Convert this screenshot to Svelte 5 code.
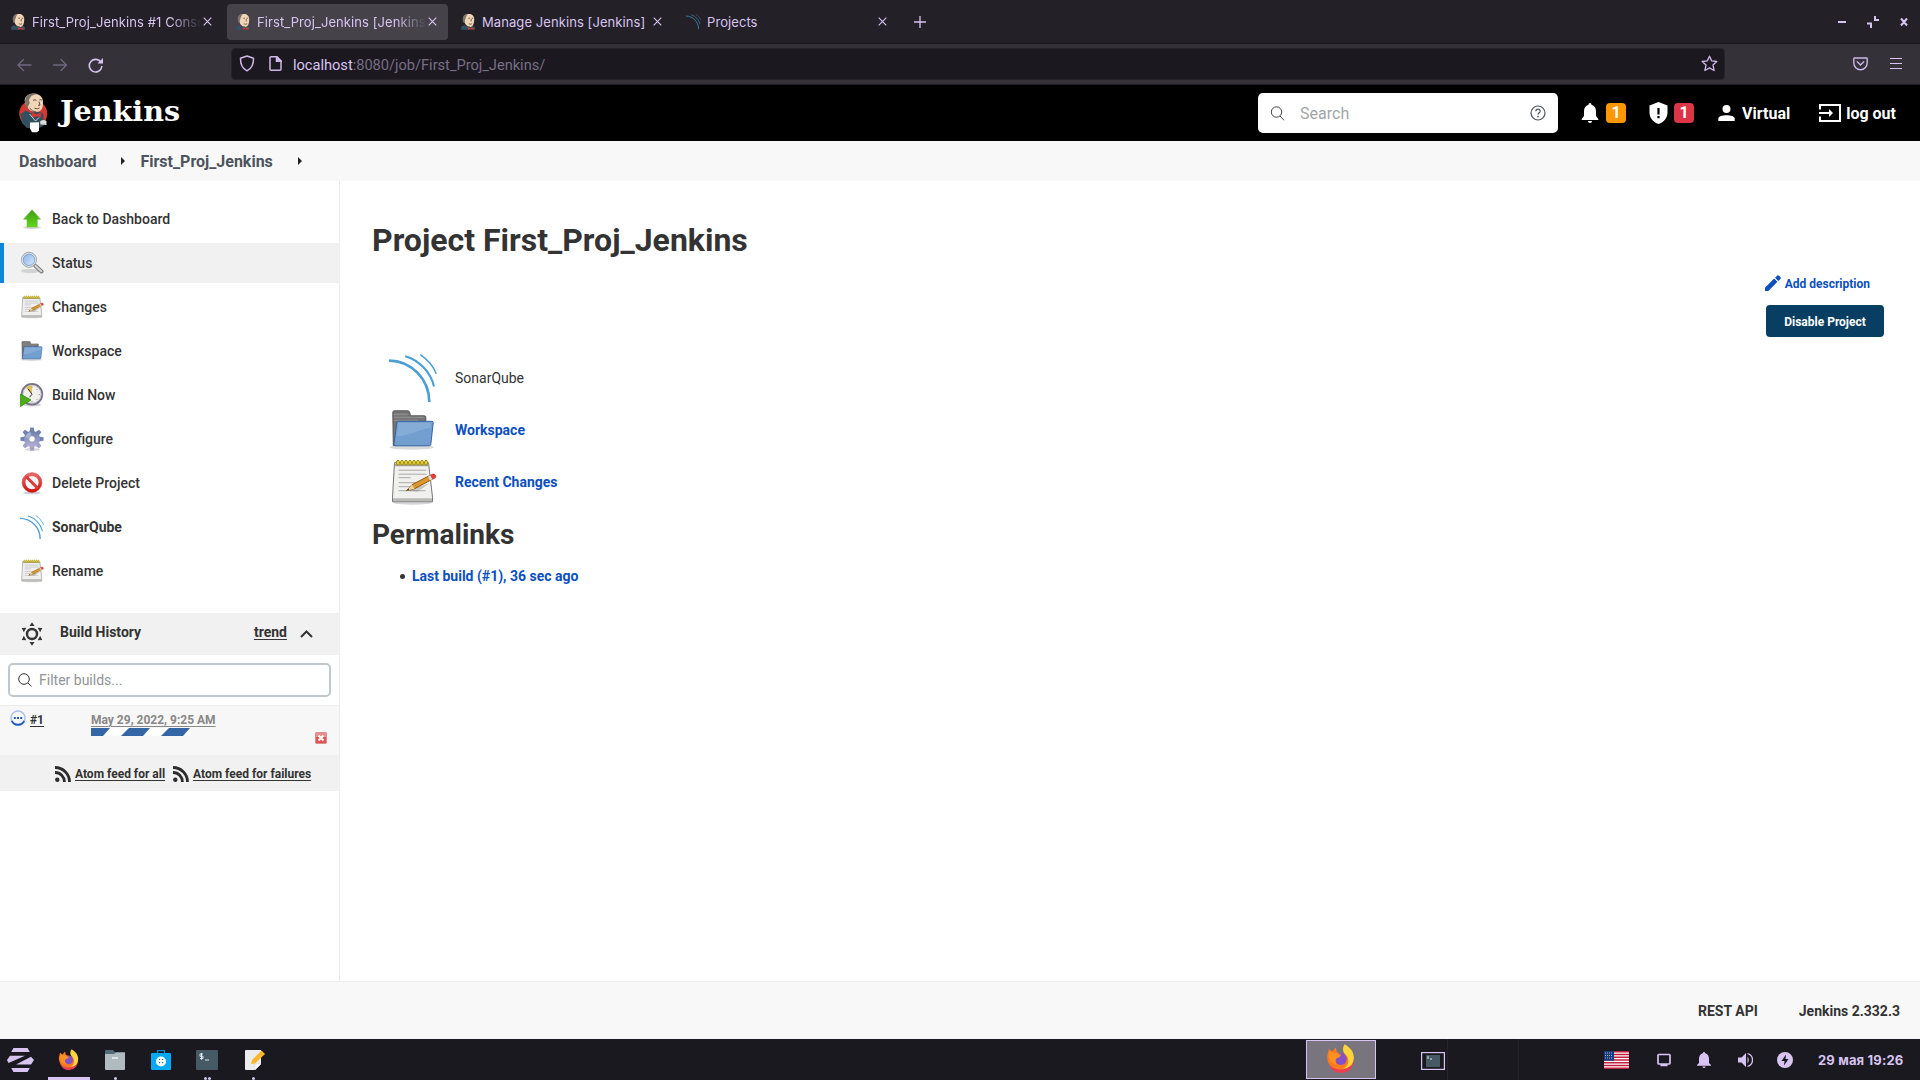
<script>
  const tabs = [
    { title: 'First_Proj_Jenkins #1 Console', icon: 'butler', fade: true },
    { title: 'First_Proj_Jenkins [Jenkins]', icon: 'butler', fade: true, active: true },
    { title: 'Manage Jenkins [Jenkins]', icon: 'butler' },
    { title: 'Projects', icon: 'sonar' }
  ];
  const tasks = [
    { icon: 'up', label: 'Back to Dashboard' },
    { icon: 'lens', label: 'Status', active: true },
    { icon: 'notepad', label: 'Changes' },
    { icon: 'folder', label: 'Workspace' },
    { icon: 'clock', label: 'Build Now' },
    { icon: 'gear', label: 'Configure' },
    { icon: 'ban', label: 'Delete Project' },
    { icon: 'sonar', label: 'SonarQube', strong: true },
    { icon: 'notepad', label: 'Rename' }
  ];
  const teeth = [0, 45, 90, 135, 180, 225, 270, 315];
  const rays = [0, 60, 120, 180, 240, 300];
  const rings = [0, 1, 2, 3, 4, 5, 6, 7];
</script>

{#snippet icon(name, size)}
  <svg width={size} height={size} viewBox="0 0 48 48" fill="none">
    {#if name === 'sonar'}
      <g stroke="#4b9fd5">
        <path stroke-width="2.7" d="M0 6.6C22 6.6 40.3 25 40.3 48" />
        <path stroke-width="2.1" d="M16.2 2.2C30 6 41.5 18 45 32.5" />
        <path stroke-width="1.6" d="M31.3 .7C38.500 5.500 44 12 47.300 19.800" />
      </g>
    {:else if name === 'folder'}
      <g transform="translate(-1.200 .8)">
        <ellipse cx="24" cy="40.500" rx="22" ry="2.500" fill="#999" opacity=".35" />
        <path d="M5 5.500q0-1.500 1.500-1.500H20q1.500 0 1.800 1.500l1 3.500H36.500q1.500 0 1.500 1.500V22L8 38.800H5.500Z" fill="#757575" stroke="#565656" />
        <path d="M6 7.500H20M6 10.500H36M6 13.500H30" stroke="#949494" />
        <path d="M9 16q.1-1.500 1.600-1.500H44q1.500 0 1.400 1.500L43 37.500q-.2 1.500-1.700 1.500H8q-2 0-1.800-2Z" fill="#729fcf" stroke="#3465a4" />
        <path d="M10.500 16H43.300L42.800 21C32 22 24 29 8.800 29.500Z" fill="#8fb4dc" opacity=".65" />
      </g>
    {:else if name === 'notepad'}
      <g transform="translate(-1.500 -.8)">
        <ellipse cx="25" cy="45" rx="20" ry="2.500" fill="#888" opacity=".35" />
        <path d="M7 5.500H41L45 40v4.500H5V40Z" fill="#f0f0ee" stroke="#777" stroke-linejoin="round" />
        <path d="M7.600 6.500H40.500V9H7.400Z" fill="#a5a5a2" />
        <path d="M5.500 41H44.500V44H5.500Z" fill="#b9b9b6" />
        {#each rings as r}
          <ellipse cx={10.5 + r * 4} cy="5.500" rx="1.400" ry="2.500" fill="#f0dc3f" stroke="#9c8a00" />
        {/each}
        <path d="M11 13H39M11 17H39M11 20.500H23M11 25.500H38M11 29.500H32M11 33.500H38" stroke="#aaa" />
        <path d="M18 33.500 30 34.500 42 26Z" fill="#888" opacity=".4" />
        <path d="M19 33.500 24.500 27.500 42.500 18.200 44.500 22.200 27 31.500Z" fill="#dc9632" stroke="#8f5902" />
        <path d="m19 33.500 5.500-6 2.500 4Z" fill="#e9d2a5" />
        <path d="m19 33.500 1.800-2.200 1 1.600Z" fill="#333" />
        <path d="m43 18 2 4.100 2.600-1.400q1.300-.9.400-2.500t-2.500-1.400Z" fill="#ef3b36" stroke="#b52a20" stroke-width=".7" />
        <path d="m40.500 19.300 2 4 2.300-1.200-2-4Z" fill="#ddd" />
      </g>
    {:else if name === 'up'}
      <ellipse cx="24" cy="41" rx="18" ry="3" fill="#777" opacity=".3" />
      <path d="M24 5.500 41 24.500H34.500V40H14V24.500H7Z" fill="url(#green)" stroke="#6bb13d" stroke-linejoin="round" />
    {:else if name === 'lens'}
      <ellipse cx="21" cy="40" rx="19" ry="4" fill="#777" opacity=".25" />
      <path d="m31 30 12 11" stroke="#777" stroke-width="8" stroke-linecap="round" />
      <path d="m31 30 11.500 10.500" stroke="#d4d4d2" stroke-width="4.500" stroke-linecap="round" />
      <circle cx="18" cy="17.500" r="15" fill="#aecbea" stroke="#a4a4a4" stroke-width="2" />
      <circle cx="18" cy="17.500" r="12.800" stroke="#f3f3f3" stroke-width="2" />
      <circle cx="18" cy="17.500" r="11.500" fill="url(#glass)" stroke="#6f96c8" stroke-width="1.500" />
    {:else if name === 'clock'}
      <ellipse cx="25" cy="44" rx="18" ry="3" fill="#777" opacity=".35" />
      <circle cx="24" cy="22.500" r="20.500" fill="#f1f0ec" stroke="#77748c" stroke-width="3.600" />
      <circle cx="24" cy="22.500" r="18" stroke="#bcbac9" stroke-width="1.500" />
      <path d="M24 22.500 12 9.500Q17 4.500 24 5Z" fill="#e2c451" />
      <path d="m24 22.500-8-11M24 22.500l-5 6" stroke="#333" stroke-width="2" />
      <path d="M24 7v3M40 23h-3M24 39v-3M35 12l-2 2M35 34l-2-2" stroke="#888" stroke-width="1.500" />
      <path d="M1 22 22 34 1 47Z" fill="#4caf18" stroke="#2d8c06" stroke-width="1.500" />
    {:else if name === 'gear'}
      <ellipse cx="25" cy="45" rx="15" ry="3" fill="#777" opacity=".3" />
      <g fill="url(#steel)">
        {#each teeth as a}
          <path d="M18.500 13 20.500 1h7l2 12Z" transform="rotate({a} 24 24)" fill={a > 90 && a < 270 ? '#a09fca' : '#7083b2'} />
        {/each}
        <circle cx="24" cy="24" r="16" />
      </g>
      <path d="M11 20Q13 12 21 10l2 8q-5 1-6 6Z" fill="#b9c1dc" opacity=".7" />
      <circle cx="24" cy="24" r="6.500" fill="#fff" stroke="#7d86ae" stroke-width="1.500" />
    {:else if name === 'ban'}
      <ellipse cx="24" cy="44" rx="18" ry="2.500" fill="#777" opacity=".35" />
      <circle cx="24" cy="23" r="16.500" fill="#f4f4f4" stroke="url(#red)" stroke-width="6.500" />
      <path d="m12.500 11.500 23 23" stroke="#dc3a3a" stroke-width="6" />
      <circle cx="24" cy="23" r="19.800" stroke="#c23030" />
    {/if}
  </svg>
{/snippet}

{#snippet head()}
  <path d="M.2 16.800v-3L3 12.200l4 1.500 5-1 2 1.500v2.600Z" fill="#335061" />
  <path d="M2.800 7C2 2.500 4.500 1 7.700 1c3.500 0 5.500 2 5.500 5.300 0 4.500-1.300 7.700-4.200 7.700C6 14 3.600 11 2.800 7Z" fill="#f0d6b7" />
  <path d="M2.300 9.500C1 4.500 2 1.200 7 .7 5 2.500 4.900 4.500 4.400 6L3.800 7.500 4 10Z" fill="#7d756d" />
  <path d="M7.300 5.200h1.700M10.600 5.200h1.600M10.200 6v2.500M7.800 10.800q2 1 3.400-.1M5 12.500q1.500 1.500 4 1.500" stroke="#5b4a3e" stroke-width=".8" fill="none" />
  <path d="m7 14.200 2.600 1 2.900-1v2.600l-2.700-.7-2.800.7Z" fill="#d33833" />
{/snippet}

{#snippet close()}
  <svg class="close" width="9" height="9" viewBox="0 0 9 9"><path d="m.7.7 7.600 7.600M8.300.7.700 8.300" stroke="#d8c4f1" stroke-width="1.100" /></svg>
{/snippet}

{#snippet firefox(size)}
  <svg width={size} height={size} viewBox="0 0 24 24">
    <path d="M2 11Q2 24 13 24 23 23 23 12L12 8Z" fill="#e83f54" />
    <path d="M1 11.500C.8 9 2 7 2.300 4L5 6.500 8 2.800l1 4 7 2 6.500 3C21.500 18 18 21 12 21 5 21 1.500 17 1 11.500Z" fill="#ff7a20" />
    <path d="M15.500.3c5 3 8 7 7.500 12C22.500 18 18 20.500 14 20.500c5-2.500 6-8 2.500-11.500C13.500 7 13.500 3 15.500.3Z" fill="#ffd43a" />
    <circle cx="12.300" cy="12.500" r="4.900" fill="#8352c9" />
    <path d="M2.500 6 8 7.500 12.500 9q-1 2.500-3.500 2.500-2.500 2.500.5 6-6-1-7-7Z" fill="#ff911f" />
  </svg>
{/snippet}

{#snippet rss()}
  <svg width="16" height="16" viewBox="0 0 16 16" fill="none" stroke="#2d2d2d" stroke-width="2.800">
    <circle cx="2.300" cy="13.700" r="2.200" fill="#2d2d2d" stroke="none" />
    <path d="M0 6.500a9.300 9.300 0 0 1 9.400 9.500M0 1.500A14.400 14.400 0 0 1 14.500 16" />
  </svg>
{/snippet}

<svg class="defs" width="0" height="0">
  <defs>
    <linearGradient id="green" x2="0" y2="1"><stop stop-color="#3f9a12" /><stop offset="1" stop-color="#62d81c" /></linearGradient>
    <linearGradient id="glass" x2="1" y2="1"><stop stop-color="#86b3e8" /><stop offset="1" stop-color="#dbe9f8" /></linearGradient>
    <linearGradient id="steel" x2="0" y2="1"><stop stop-color="#6b80ac" /><stop offset="1" stop-color="#b5b0d6" /></linearGradient>
    <linearGradient id="red" x2="0" y2="1"><stop stop-color="#ea6666" /><stop offset="1" stop-color="#d01414" /></linearGradient>
  </defs>
</svg>

<div class="screen">
  <div class="tabbar">
    {#each tabs as tab}
      <div class="tab" class:active={tab.active}>
        {#if tab.icon === 'butler'}
          <svg class="fav" width="15" height="17" viewBox="0 0 15 17">{@render head()}</svg>
        {:else}
          <span class="fav dim">{@render icon('sonar', 15)}</span>
        {/if}
        <span class="tabtitle" class:fade={tab.fade}>{tab.title}</span>
        {@render close()}
      </div>
    {/each}
    <svg class="plus" width="12" height="12" viewBox="0 0 12 12"><path d="M6 0v12M0 6h12" stroke="#d8c4f1" stroke-width="1.300" /></svg>
    <svg class="winctl" width="71" height="12" viewBox="0 0 71 12" stroke="#d8c4f1" stroke-width="2" fill="none">
      <path d="M0 6h8M37 0v5M36 4h5M29 7.500h5M33 6.500V12M63 2.500l6 7M69 2.500l-6 7" />
    </svg>
  </div>

  <div class="navbar">
    <svg class="arrows" width="86" height="16" viewBox="0 0 86 16" fill="none" stroke-width="1.400" stroke-linecap="round" stroke-linejoin="round">
      <path d="M14 8H1M6.500 2.500 1 8l5.500 5.500M36.500 8h13M44 2.500 49.500 8 44 13.500" stroke="#6f657e" />
      <path d="M84 5.500A6.300 6.300 0 1 0 84.800 9.500" stroke="#d8c4f1" stroke-width="1.600" />
      <path d="M86 1v5.500H80.500Z" fill="#d8c4f1" stroke="none" />
    </svg>
    <div class="urlbar">
      <svg width="16" height="17" viewBox="0 0 16 17" fill="none" stroke="#cdb7e8" stroke-width="1.500"><path d="M8 1 14.500 3.200C14.700 9.500 12.500 13.500 8 15.800 3.500 13.500 1.300 9.500 1.500 3.200Z" stroke-linejoin="round" /></svg>
      <svg class="page" width="13" height="15" viewBox="0 0 13 15" fill="none" stroke="#cdb7e8" stroke-width="1.500"><path d="M1 1.700Q1 .8 2 .8H8L12 4.800V13.300Q12 14.200 11 14.200H2Q1 14.200 1 13.300Z" /><path d="M7.500 1V5.300H12Z" fill="#cdb7e8" /></svg>
      <span class="url"><b>localhost</b>:8080/job/First_Proj_Jenkins/</span>
      <svg class="star" width="17" height="17" viewBox="0 0 17 17" fill="none" stroke="#cdb7e8" stroke-width="1.300" stroke-linejoin="round"><path d="m8.500 1.200 2.200 4.700 5.100.6-3.800 3.500 1.100 5.500-4.600-2.600-4.600 2.600L5 10 1.200 6.500l5.100-.6Z" /></svg>
    </div>
    <svg class="pocket" width="15" height="14" viewBox="0 0 15 14" fill="none" stroke="#cdb7e8" stroke-width="1.400"><path d="M1.500 1h12q.7 0 .7.700V6a6.700 6.700 0 0 1-13.400 0V1.700Q.8 1 1.500 1Z" /><path d="m4.300 4.800 3.200 3.300 3.200-3.300" stroke-linecap="round" /></svg>
    <svg class="menu" width="12" height="11" viewBox="0 0 12 11"><path d="M0 .5h12M0 5.500h12M0 10.500h12" stroke="#d8c4f1" /></svg>
  </div>

  <header class="header">
    <svg class="logo" width="29" height="40" viewBox="0 0 29 40">
      <ellipse cx="14.200" cy="20.500" rx="14" ry="13.500" fill="#d33833" />
      <path d="M1.500 21 7 17.500l5 2.500 8-1.500q5 1.500 4.500 6v8.500L20 35H8L3 30Z" fill="#335061" />
      <path d="M6 9.500C4.500 4 9 .8 14.500.8 20.500.8 24 4 24 9.500c0 6-2 9.500-6.500 9.500C12 19 8 16 6 9.500Z" fill="#f0d6b7" />
      <path d="M8.500 16C4 8.500 5.500 1.500 13.500.3c1.500-.2 4 0 5 .6-5 .5-7.500 2.600-8.500 6.500l.8 2.600-1.300 2.500Z" fill="#7d756d" />
      <path d="M14 7.300q2-1 3.500 0M20.300 7q1.500-.8 2.700.2M20 8.500l1 3.800h-2M15.500 15.200q3 1.500 5-.2M10.500 15q3 4 7 4" stroke="#51443a" stroke-width=".9" fill="none" />
      <path d="m12.500 19.500 5 1.800L22 19.500v5l-4.200-1.300-4.800 1.500Z" fill="#d33833" />
      <path d="m10.500 21 6 7 3.500-3.500" stroke="#fff" fill="none" stroke-width=".7" />
      <path d="m11 29.500 9-.3v8l-2 2h-5l-2-4Z" fill="#fff" />
      <path d="M21 28.500q3.500-2.500 6.500-.5v4l-6-.5Z" fill="#d9d9d9" />
    </svg>
    <span class="brand">Jenkins</span>
    <div class="search">
      <svg width="15" height="15" viewBox="0 0 15 15" fill="none" stroke="#444"><circle cx="6.500" cy="6" r="5.200" /><path d="m10 10 4 4.300" /></svg>
      <span>Search</span>
      <svg class="help" width="16" height="16" viewBox="0 0 16 16" fill="none" stroke="#4d545d" stroke-width="1.200"><circle cx="8" cy="8" r="7" /><path d="M5.800 6.300Q5.900 4.200 8 4.200T10.200 6.200C10.200 7.700 8 7.700 8 9.500" /><circle cx="8" cy="11.600" r=".35" /></svg>
    </div>
    <div class="alerts">
      <svg width="18" height="20" viewBox="0 0 18 20" fill="#fff"><path d="M9 0q1.500 0 1.500 1.700Q15 3 15 8.500V13l2.300 3v1H.7v-1L3 13V8.500Q3 3 7.500 1.700 7.500 0 9 0ZM7 18h4q0 2-2 2t-2-2Z" /></svg>
      <span class="badge">1</span>
      <svg class="shield" width="19" height="22" viewBox="0 0 19 22"><path d="m9.500 0 9 3.600v7.200c0 5-3.500 9.500-9 11.200C4 20.300.5 15.800.5 10.800V3.600Z" fill="#fff" /><path d="M9.500 6v6.500M9.500 14v2.200" stroke="#000" stroke-width="2.200" /></svg>
      <span class="badge red">1</span>
    </div>
    <svg class="person" width="17" height="16" viewBox="0 0 17 16" fill="#fff"><circle cx="8.500" cy="4" r="4" /><path d="M.3 16v-2.500C.3 9 16.700 9 16.700 13.500V16Z" /></svg>
    <span class="user">Virtual</span>
    <svg class="exit" width="22" height="18" viewBox="0 0 22 18" fill="none" stroke="#fff" stroke-width="2"><path d="M1 5.500V1H21V17H1V12.500M0 9H13" /><path d="m10 5 4 4-4 4Z" fill="#fff" stroke="none" /></svg>
    <span class="user">log out</span>
  </header>

  <nav class="crumbs">
    <span>Dashboard</span><i></i><span>First_Proj_Jenkins</span><i></i>
  </nav>

  <div class="body">
    <aside class="side">
      <div class="tasks">
        {#each tasks as t}
          <div class="task" class:active={t.active} class:strong={t.strong}>
            {@render icon(t.icon, 24)}<span>{t.label}</span>
          </div>
        {/each}
      </div>
      <div class="bhead">
        <svg class="sun" width="24" height="24" viewBox="0 0 24 24">
          <circle cx="12" cy="12" r="5" fill="none" stroke="#333" stroke-width="2.400" />
          {#each rays as a}<path d="M9.500 4 12 .2l2.500 3.800Z" fill="#333" transform="rotate({a} 12 12)" />{/each}
        </svg>
        <span class="btitle">Build History</span>
        <span class="trend">trend</span>
        <svg class="chev" width="13" height="8" viewBox="0 0 13 8" fill="none" stroke="#333" stroke-width="2"><path d="m1 7 5.500-5.500L12 7" /></svg>
      </div>
      <div class="filter">
        <div class="finput">
          <svg width="14" height="14" viewBox="0 0 14 14" fill="none" stroke="#333"><circle cx="6" cy="6" r="5.300" /><path d="m9.800 9.800 3.700 3.700" /></svg>
          <span>Filter builds...</span>
        </div>
      </div>
      <div class="build">
        <svg class="prog" width="16" height="17" viewBox="0 0 16 17" fill="none"><circle cx="8" cy="8" r="7" stroke="#a9c1e6" stroke-width="1.500" /><path d="M1.800 11a7 7 0 0 0 12.400 0" stroke="#1f5dbc" stroke-width="1.800" /><path d="M3.800 8h2M7 8h2M10.200 8h2" stroke="#1f5dbc" stroke-width="2.200" /></svg>
        <span class="num">#1</span>
        <div class="when">
          <span>May 29, 2022, 9:25 AM</span>
          <svg width="100" height="8" viewBox="0 0 100 8"><path fill="#fff" d="M0 0h100v8H0Z" /><path fill="#3465a4" d="M0 0h19l-7 8H0ZM38 0h21l-7 8H30ZM78 0h21l-7 8H70Z" /></svg>
        </div>
        <svg class="stop" width="12" height="12" viewBox="0 0 12 12"><rect x=".5" y=".5" width="11" height="11" rx="1" fill="#e35353" stroke="#dd8f8f" /><path d="M1 1h10v4H1Z" fill="#ec8c8c" /><path d="m3.500 3.500 5 5M8.500 3.500l-5 5" stroke="#fff" stroke-width="2" /></svg>
      </div>
      <div class="feeds">
        {@render rss()}<span>Atom feed for all</span>
        {@render rss()}<span>Atom feed for failures</span>
      </div>
    </aside>

    <main class="main">
      <h1>Project First_Proj_Jenkins</h1>
      <div class="actions">
        <div class="adddesc">
          <svg width="16" height="16" viewBox="0 0 17 17" fill="#0b4fc0"><path d="M0 13.500V17h3.500L13.200 7.200 9.700 3.700ZM16.500 3.900q.7-.7 0-1.400L14.500.5q-.7-.7-1.400 0L10.700 2.800l3.500 3.500Z" /></svg>
          <span>Add description</span>
        </div>
        <button>Disable Project</button>
      </div>
      <div class="links">
        <div>{@render icon('sonar', 48)}<span class="plain">SonarQube</span></div>
        <div>{@render icon('folder', 48)}<span>Workspace</span></div>
        <div>{@render icon('notepad', 48)}<span>Recent Changes</span></div>
      </div>
      <h2>Permalinks</h2>
      <div class="perma"><i></i><span>Last build (#1), 36 sec ago</span></div>
    </main>
  </div>

  <footer class="footer"><span>REST API</span><span>Jenkins 2.332.3</span></footer>

  <div class="taskbar">
    <div class="apps">
      <div class="app zorin"><svg width="27" height="24" viewBox="0 0 27 24" fill="#d8c4f1"><path d="M6.500 0h14l2.300 4H4.200ZM4.200 20h18.600l-2.300 4h-14ZM3 7.700H18L1.500 15 0 12ZM24 8.700 27 12l-3 4.500H9Z" /></svg></div>
      <div class="app fox">{@render firefox(21)}<em class="bar"></em></div>
      <div class="app"><svg width="20" height="20" viewBox="0 0 20 20"><path d="M0 1q0-1 1-1H8l2 2H19q1 0 1 1V8H0Z" fill="#536b78" /><path d="M0 4H9l2-1.500h9V19q0 1-1 1H1q-1 0-1-1Z" fill="#b0bbc0" /><path d="M7 8h6" stroke="#fff" stroke-width="1.200" /></svg><em class="dot"></em></div>
      <div class="app"><svg width="20" height="20" viewBox="0 0 20 20"><path d="M6.500 4V.7h7V4" fill="none" stroke="#0486cf" stroke-width="1.300" /><rect y="3" width="20" height="17" rx="1" fill="#03a9f4" /><circle cx="10" cy="11.500" r="5" fill="#fff" /><path d="M8 9.500h1.200M11 9.500h1.200M8 12.700h1.200M11 12.700h1.200" stroke="#1c6d96" stroke-width="1.200" /></svg></div>
      <div class="app"><svg width="22" height="20" viewBox="0 0 22 20"><rect width="22" height="20" rx="1" fill="#455a64" /><path d="M7 4H4v2.300h3v2.300H4M5.500 3v6.700M9 10h4" fill="none" stroke="#dfe7ea" /></svg><em class="dot two"></em></div>
      <div class="app edit"><svg width="20" height="20" viewBox="0 0 20 20"><path d="M1 0H16V14l-6 6H1Q0 20 0 19V1Q0 0 1 0Z" fill="#ececec" /><path d="M16 14h-6v6Z" fill="#fff" stroke="#ccc" stroke-width=".5" /><path d="M6 14 7 10 16.500.5 20 4 10 13.500Z" fill="#fbb72c" /></svg><em class="dot"></em></div>
    </div>
    <div class="spaces">
      <div class="space on">{@render firefox(29)}</div>
      <div class="space"><svg class="mini" width="24" height="18" viewBox="0 0 24 18"><rect x=".6" y=".6" width="22.800" height="16.800" fill="#1b1920" stroke="#d8c4f1" stroke-width="1.200" /><rect x="5" y="3" width="14" height="12" fill="#455a64" /><path d="M7 4v3M9 7h2" stroke="#dfe7ea" /></svg></div>
      <div class="space"></div>
      <div class="space last"></div>
    </div>
    <div class="tray">
      <svg width="25" height="18" viewBox="0 0 25 18"><path fill="#fff" d="M0 0h25v18H0Z" /><path d="M0 .7h25M0 3.500h25M0 6.300h25M0 9h25M0 11.800h25M0 14.500h25M0 17.300h25" stroke="#c11f3d" stroke-width="1.400" /><path fill="#173a7a" d="M0 0h10v9.700H0Z" /><path d="M1 2h8M1 4.500h8M1 7h8" stroke="#a9b5d0" stroke-dasharray="1 1" /></svg>
      <svg class="mon" width="14" height="14" viewBox="0 0 14 14" fill="none" stroke="#d8c4f1" stroke-width="1.700"><path d="M1.800 1.500H12.200Q13 1.500 13 2.300V10.200Q13 11 12.200 11H1.800Q1 11 1 10.200V2.300Q1 1.500 1.800 1.500ZM3.500 12.300h7" /></svg>
      <svg class="ring" width="14" height="16" viewBox="0 0 14 16" fill="#d8c4f1"><path d="M7 0Q8 0 8.200 1.300 12 2.500 12 7v4l2 2v.8H0V13l2-2V7Q2 2.500 5.800 1.300 6 0 7 0ZM5.500 14.500h3Q8.500 16 7 16T5.500 14.500Z" /></svg>
      <svg width="15" height="16" viewBox="0 0 15 16" fill="#d8c4f1"><path d="M0 5.500h3.500L8 1v14L3.500 10.500H0Z" /><path d="M9.500 4.500Q12 8 9.500 11.500Z" /><path d="M9.500 1.500q5 1.500 5 6.500t-5 6.500" fill="none" stroke="#d8c4f1" stroke-width="1.300" /></svg>
      <svg class="bolt" width="16" height="16" viewBox="0 0 16 16"><circle cx="8" cy="8" r="8" fill="#d8c4f1" /><path d="M9 2.500 4.500 9h3L7 13.500 11.500 7h-3Z" fill="#1b1920" /></svg>
      <span>29 мая 19:26</span>
    </div>
  </div>
</div>

<style>
  :global(body) { margin: 0; overflow: hidden; }
  .defs { position: absolute; }
  svg { display: block; flex: none; }
  .screen { width: 1920px; height: 1080px; display: flex; flex-direction: column; background: #fff; color: #333; font-family: Roboto, sans-serif; font-size: 14px; overflow: hidden; }
  .screen * { box-sizing: border-box; }

  .tabbar { height: 44px; flex: none; display: flex; align-items: center; background: #232027; border-bottom: 1px solid #17151a; padding-left: 2px; }
  .tab { width: 221px; height: 36px; margin-right: 4px; border-radius: 4px; display: flex; align-items: center; padding: 0 11px 0 9px; font: 13px Inter, sans-serif; color: #d8c4f1; }
  .tab.active { background: #45424a; }
  .fav { margin-right: 6px; }
  .dim { opacity: .8; }
  .tabtitle { flex: 1; overflow: hidden; white-space: nowrap; letter-spacing: .08px; padding-top: 1px; }
  .fade { -webkit-mask-image: linear-gradient(90deg, #000 82%, transparent 101%); }
  .close { margin-left: 3px; }
  .plus { margin-left: 12px; }
  .winctl { margin: 0 11px 0 auto; }

  .navbar { height: 41px; flex: none; display: flex; align-items: center; background: #343138; border-bottom: 1px solid #232027; padding: 0 18px 1px 17px; }
  .arrows { margin: 2px 128px 0 0; overflow: visible; }
  .urlbar { width: 1494px; height: 32px; background: #1b181f; border: 1px solid #26232a; border-radius: 4px; display: flex; align-items: center; padding: 0 6px 0 7px; }
  .page { margin: 0 11px 0 14px; }
  .url { font-size: 14.67px; letter-spacing: -.03px; color: #776e85; padding-top: 2px; }
  .url b { font-weight: 400; color: #d8c4f1; }
  .star { margin-left: auto; }
  .pocket { margin-left: auto; }
  .menu { margin-left: 22px; }

  .header { height: 56px; flex: none; background: #000; display: flex; align-items: center; padding: 0 24px 0 19px; color: #fff; }
  .brand { font: bold 28.6px/40px "DejaVu Serif", serif; margin: -4px auto 0 12px; }
  .search { width: 300px; height: 40px; background: #fff; border-radius: 5px; display: flex; align-items: center; padding: 0 12px; font-size: 16px; color: #a2a6aa; }
  .search span { margin-left: 15px; }
  .help { margin-left: auto; }
  .alerts { display: flex; align-items: center; margin-left: 23px; }
  .badge { width: 20px; height: 20px; margin-left: 7px; border-radius: 4px; background: #ff9800; font: bold 16px/20px Roboto, sans-serif; text-align: center; }
  .badge.red { background: #dc3545; margin-left: 6px; }
  .shield { margin-left: 23px; }
  .person { margin-left: 24px; }
  .user { font-weight: 700; font-size: 16px; margin-left: 7px; }
  .exit { margin-left: 29px; }
  .exit + .user { margin-left: 5px; }

  .crumbs { height: 40px; flex: none; background: #f8f8f8; display: flex; align-items: center; padding-left: 19px; font-size: 16px; font-weight: 700; color: #4d545d; }
  .crumbs i { border: 4px solid transparent; border-left-color: #222; border-right: 0; margin: 0 15px 0 25px; }

  .body { height: 800px; flex: none; display: flex; }
  .side { width: 340px; border-right: 1px solid #ececec; }
  .tasks { padding-top: 18px; height: 432px; display: flex; flex-direction: column; gap: 4px; }
  .task { height: 40px; display: flex; align-items: center; gap: 8px; padding-left: 20px; font-weight: 500; }
  .task.active { background: #f1f1f1; border-left: 4px solid #0b87d6; padding-left: 16px; }
  .task.strong { font-weight: 700; }
  .bhead { height: 42px; background: #f1f1f1; display: flex; align-items: center; padding: 0 26px 4px 20px; font-weight: 700; }
  .sun { margin-top: 3px; }
  .btitle { margin-left: 16px; }
  .trend { margin-left: auto; text-decoration: underline; text-underline-offset: 2px; }
  .chev { margin: 4px 0 0 13px; }
  .filter { height: 50px; padding: 8px 8px 0; }
  .finput { height: 34px; border: 2px solid #bfc8cd; border-radius: 5px; display: flex; align-items: center; gap: 7px; padding-left: 8px; color: #909497; }
  .build { height: 50px; background: #f7f7f7; border-top: 1px solid #ececec; display: flex; align-items: flex-start; padding: 4px 12px 0 10px; font-size: 12px; font-weight: 700; }
  .num { margin: 3px 0 0 4px; text-decoration: underline; text-underline-offset: 2px; }
  .when { margin: 3px 0 0 47px; color: #888; text-decoration: underline; text-underline-offset: 2px; white-space: nowrap; }
  .when svg { margin-top: 1px; }
  .stop { margin: 22px 0 0 auto; }
  .feeds { height: 36px; background: #f1f1f1; display: flex; align-items: center; padding: 1px 0 0 55px; font-size: 12px; font-weight: 700; }
  .feeds span { margin: 0 8px 0 4px; padding-top: 1px; text-decoration: underline; text-underline-offset: 2px; white-space: nowrap; }

  .main { flex: 1; padding: 39px 36px 0 32px; }
  h1 { font-size: 32px; line-height: 40px; font-weight: 700; margin: 0; }
  .actions { display: flex; flex-direction: column; align-items: flex-end; margin-top: 13px; color: #0b4fc0; }
  .adddesc { display: flex; align-items: center; height: 20px; gap: 4px; margin-right: 14px; font-size: 12px; font-weight: 700; }
  .adddesc span { padding-top: 2px; }
  button { width: 118px; height: 32px; margin-top: 12px; border: 0; border-radius: 4px; background: #083e62; color: #fff; font: bold 12px Roboto, sans-serif; padding: 2px 0 0; }
  .links { margin-top: 15px; padding-left: 17px; }
  .links div { height: 52px; display: flex; align-items: center; gap: 18px; font-weight: 700; color: #0b4fc0; }
  .links .plain { font-weight: 400; color: #333; }
  h2 { font-size: 28px; line-height: 36px; font-weight: 700; margin: 9px 0 0; }
  .perma { display: flex; align-items: center; height: 18px; margin: 14px 0 0 28px; gap: 7px; }
  .perma i { width: 5px; height: 5px; border-radius: 50%; background: #333; margin-top: 1px; }
  .perma span { font-weight: 700; color: #0b4fc0; }

  .footer { height: 58px; flex: none; background: #f8f8f8; border-top: 1px solid #ececec; display: flex; align-items: center; justify-content: flex-end; gap: 41px; padding: 1px 20px 0 0; font-weight: 700; }

  .taskbar { height: 41px; flex: none; background: #1b1920; display: flex; }
  .apps { display: flex; width: 1306px; }
  .app { position: relative; width: 46px; display: flex; align-items: center; justify-content: center; }
  .app.zorin { padding-right: 6px; }
  .fox { padding-right: 1px; }
  .edit { padding-left: 3px; }
  .bar { position: absolute; left: 2px; bottom: 0; width: 42px; height: 3px; background: #d8c4f1; }
  .dot { position: absolute; left: 22px; bottom: 0; width: 3px; height: 3px; border-radius: 2px; background: #d8c4f1; }
  .two { left: 20px; box-shadow: 4px 0 #d8c4f1; }
  .spaces { display: flex; width: 284px; }
  .space { width: 71px; border-right: 1px solid #26232a; display: flex; align-items: center; justify-content: center; }
  .space.on { width: 70px; height: 39px; background: #79757f; border: 1px solid #d8c4f1; margin-right: 1px; margin-top: 1px; padding: 0 2px 2px 0; }
  .mini { margin: 3px 0 0 42px; }
  .last { border: 0; }
  .tray { flex: 1; display: flex; align-items: center; padding-left: 14px; font: 700 13px Inter, sans-serif; color: #d8c4f1; }
  .tray svg + svg { margin-left: 27px; }
  .tray svg + .mon { margin-left: 28px; }
  .tray svg + .ring { margin-left: 26px; }
  .tray svg + .bolt { margin-left: 24px; }
  .tray span { margin-left: 25px; white-space: nowrap; letter-spacing: .16px; }
</style>
